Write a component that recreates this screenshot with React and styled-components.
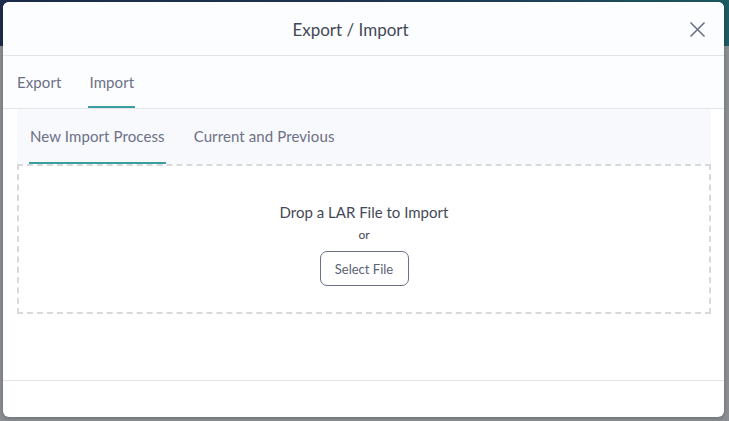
import React, { useState } from 'react';
import styled, { createGlobalStyle } from 'styled-components';

const GlobalStyle = createGlobalStyle`
   html, body {
      margin: 0;
      padding: 0;
      height: 100%;
   }
   body {
      font-family: "Lato", "Open Sans", sans-serif;
      background: #8b8e92;
      overflow: hidden;
   }
`

const Backdrop = styled.div`
   height: 421px;
   display: flex;
   flex-direction: column;
`

const TopBar = styled.div`
   height: 46px;
   background: linear-gradient(90deg, #1c2d4d 0%, #1e3a55 60%, #1f5a62 100%);
`

const Shade = styled.div`
   flex: 1;
   background: #8b8e92;
`

const Modal = styled.div`
   position: absolute;
   left: 3px;
   top: 2px;
   width: 721px;
   height: 415px;
   background: #fff;
   border-radius: 6px;
   box-shadow: 0 1px 4px rgba(0,0,0,0.25);
   display: flex;
   flex-direction: column;
   overflow: hidden;
`

const Header = styled.div`
   height: 54px;
   flex-shrink: 0;
   display: flex;
   align-items: center;
   padding: 2px 0 0 0;
   box-sizing: border-box;
   background: #fcfdfe;
   border-bottom: 1px solid #e3e5e9;

   & h2 {
      flex: 1;
      margin: 0;
      text-align: center;
      font-size: 17px;
      font-weight: 400;
      color: #454956;
   }
`

const CloseButton = styled.button`
   width: 17px;
   height: 17px;
   margin: 0 18px 0 -9px;
   padding: 0;
   border: none;
   background: none;
   cursor: pointer;
   display: flex;
`

const TabBar = styled.div`
   height: 53px;
   flex-shrink: 0;
   display: flex;
   gap: 26px;
   padding: 2px 13px 0;
   box-sizing: border-box;
   background: #fcfdfe;
   border-bottom: 1px solid #e3e5e9;
`

const Tab = styled.div`
   display: flex;
   align-items: center;
   font-size: 15px;
   color: #6c7086;
   padding: 0 1px;
   letter-spacing: 0.1px;
   border-bottom: 2px solid ${p => p.active ? '#3b9fa0' : 'transparent'};
   cursor: pointer;
`

const Body = styled.div`
   flex: 1;
   padding: 0 13px 0 14px;
   display: flex;
   flex-direction: column;
`

const SubTabBar = styled.div`
   height: 55px;
   display: flex;
   gap: 27px;
   padding: 1px 12px 0;
   box-sizing: border-box;
   background: #f8f9fc;
`

const DropZone = styled.div`
   height: 150px;
   box-sizing: border-box;
   border: 2px dashed #d9d9db;
   display: flex;
   flex-direction: column;
   align-items: center;
   padding-top: 37px;
`

const DropTitle = styled.div`
   font-size: 15px;
   color: #454956;
`

const Or = styled.div`
   font-size: 12px;
   color: #454956;
   margin-top: 6px;
`

const SelectButton = styled.button`
   margin-top: 9px;
   width: 89px;
   height: 35px;
   border: 1px solid #6c7086;
   border-radius: 7px;
   background: #fff;
   font-family: inherit;
   font-size: 13px;
   color: #5d6177;
   cursor: pointer;
`

const Footer = styled.div`
   height: 37px;
   flex-shrink: 0;
   box-sizing: border-box;
   border-top: 1px solid #e3e5e9;
`

const App = () => {
   const [tab, setTab] = useState('import');
   const [subTab, setSubTab] = useState('new');

   return (
      <>
         <GlobalStyle />
         <Backdrop>
            <TopBar />
            <Shade />
         </Backdrop>
         <Modal>
            <Header>
               <h2>Export / Import</h2>
               <CloseButton aria-label="Close">
                  <svg width="17" height="17" viewBox="0 0 17 17">
                     <path d="M1.5 1.5 L15.5 15.5 M15.5 1.5 L1.5 15.5" stroke="#6c7086" strokeWidth="1.6" fill="none" />
                  </svg>
               </CloseButton>
            </Header>
            <TabBar>
               <Tab active={tab === 'export'} onClick={() => setTab('export')}>Export</Tab>
               <Tab active={tab === 'import'} onClick={() => setTab('import')}>Import</Tab>
            </TabBar>
            <Body>
               <SubTabBar>
                  <Tab active={subTab === 'new'} onClick={() => setSubTab('new')}>New Import Process</Tab>
                  <Tab active={subTab === 'current'} onClick={() => setSubTab('current')}>Current and Previous</Tab>
               </SubTabBar>
               <DropZone>
                  <DropTitle>Drop a LAR File to Import</DropTitle>
                  <Or>or</Or>
                  <SelectButton>Select File</SelectButton>
               </DropZone>
            </Body>
            <Footer />
         </Modal>
      </>
   )
}

export default App;
